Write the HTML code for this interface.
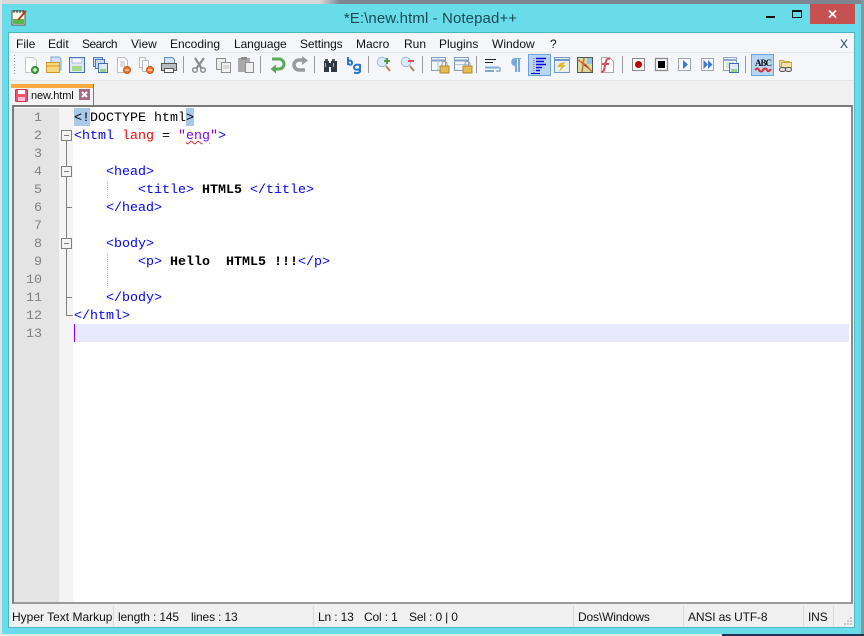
<!DOCTYPE html>
<html>
<head>
<meta charset="utf-8">
<style>
html,body{margin:0;padding:0}
body{width:864px;height:636px;overflow:hidden;position:relative;background:#68dce9;font-family:"Liberation Sans",sans-serif}
.a{position:absolute}
.m{position:absolute;top:36px;font-size:12px;line-height:16px;color:#111;white-space:nowrap}
.l{position:absolute;left:74px;height:18px;font:13.33px/18px "Liberation Mono",monospace;white-space:pre;color:#000;padding-top:2px}
.n{position:absolute;left:13px;width:29px;height:18px;text-align:right;font:13.33px/18px "Liberation Mono",monospace;color:#808080;padding-top:2px}
.t{color:#0000ff}.b{font-weight:bold;color:#000}
.s{position:absolute;top:610px;font-size:12px;line-height:14px;color:#111;white-space:nowrap;letter-spacing:-.15px}
.d{position:absolute;top:606px;width:1px;height:20px;background:#d8d8d8}
</style>
</head>
<body>
<div class="a" style="left:0;top:0;width:864px;height:4px;background:linear-gradient(90deg,#d8d8d8 0,#d8d8d8 320px,#7d8794 340px,#7d8794 100%)"></div>
<div class="a" style="left:0;top:0;width:2px;height:636px;background:#dfe3e6"></div>
<div class="a" style="left:861px;top:0;width:3px;height:636px;background:#8b95a0"></div>
<div class="a" style="left:0;top:634px;width:864px;height:2px;background:linear-gradient(90deg,#e4e4e4 0,#e4e4e4 722px,#1d3550 722px,#1d3550 100%)"></div>
<div class="a" style="left:2px;top:4px;width:859px;height:630px;background:#68dce9"></div>

<svg class="a" style="left:11px;top:9px" width="17" height="17" viewBox="0 0 17 17">
<rect x="1" y="2" width="13" height="14" fill="#fbfbe8" stroke="#555"/>
<rect x="2" y="10" width="11" height="5" fill="#57b94a"/>
<path d="M3 1v3M6 1v3M9 1v3M12 1v3" stroke="#333"/>
<path d="M7 11 15 2" stroke="#b9421e" stroke-width="2"/>
</svg>
<div class="a" style="left:0;width:861px;top:9px;text-align:center;font-size:15px;line-height:20px;color:#1d4a55;letter-spacing:.1px">*E:\new.html - Notepad++</div>
<div class="a" style="left:766px;top:16px;width:9px;height:2px;background:#111"></div>
<div class="a" style="left:792px;top:10px;width:8px;height:5px;border:1px solid #111;border-top-width:2px"></div>
<div class="a" style="left:810px;top:4px;width:45px;height:20px;background:#c75050"></div>
<svg class="a" style="left:828px;top:10px" width="9" height="8"><path d="M1 .5 8 7.500M8 .5 1 7.500" stroke="#fff" stroke-width="1.800"/></svg>

<div class="a" style="left:9px;top:33px;width:845px;height:594px;background:#f0f0f0;box-shadow:0 0 0 1px #4fb6c4"></div>
<div class="a" style="left:9px;top:33px;width:845px;height:19px;background:#f5f6fa"></div>
<div class="a" style="left:9px;top:52px;width:845px;height:29px;background:#f5f6f9;border-top:1px solid #e6e8ec;border-bottom:1px solid #e4e4e4;box-sizing:border-box"></div>

<div class="m" style="left:16px">File</div>
<div class="m" style="left:48px">Edit</div>
<div class="m" style="left:82px;letter-spacing:-.5px">Search</div>
<div class="m" style="left:131px">View</div>
<div class="m" style="left:170px">Encoding</div>
<div class="m" style="left:234px;letter-spacing:-.1px">Language</div>
<div class="m" style="left:300px;letter-spacing:-.1px">Settings</div>
<div class="m" style="left:356px">Macro</div>
<div class="m" style="left:404px">Run</div>
<div class="m" style="left:439px">Plugins</div>
<div class="m" style="left:492px">Window</div>
<div class="m" style="left:550px">?</div>
<div class="m" style="left:840px;color:#1d3f70">X</div>

<svg class="a" style="left:0;top:50px" width="864" height="32" viewBox="0 50 864 32">
<path d="M14 55.500h1M14 58.500h1M14 61.500h1M14 64.500h1M14 67.500h1M14 70.500h1M14 73.500h1" stroke="#9a9a9a" stroke-dasharray="1 1"/>
<path d="M183.500 56v17M260.500 56v17M314.500 56v17M368.500 56v17M422.500 56v17M476.500 56v17M622.500 56v17M745.500 56v17" stroke="#9b9b9b"/>
<rect x="528.500" y="54.500" width="22" height="21" fill="#b6d6f6" stroke="#6aa3e0"/>
<rect x="751.500" y="54.500" width="22" height="21" fill="#b6d6f6" stroke="#6aa3e0"/>
<path d="M25.500 57.500h8l3 3v12h-11z" fill="#fff" stroke="#c8c8c8"/>
<circle cx="35" cy="70" r="3.500" fill="#4fa84a" stroke="#2f7c31"/><path d="M33 70h4M35 68v4" stroke="#fff"/>
<path d="M51 57h8l2 2v11H51z" fill="#cfe0f8" stroke="#7ba4d8"/>
<rect x="46.500" y="62.500" width="13" height="10" fill="#f7d77c" stroke="#cf9a2a"/><path d="M47 66h12" stroke="#cf9a2a"/>
<rect x="69.500" y="57.500" width="15" height="15" fill="#dfe9f8" stroke="#3f6fb5"/>
<rect x="72" y="58" width="10" height="5" fill="#f3f6fb" stroke="#6b90c6" stroke-width=".5"/>
<rect x="72" y="66" width="10" height="5" fill="#a8d88a"/>
<rect x="93.500" y="57.500" width="9" height="9" fill="#c9daf3" stroke="#4c78b8"/>
<rect x="95.500" y="59.500" width="9" height="9" fill="#c9daf3" stroke="#4c78b8"/>
<rect x="98.500" y="63.500" width="9" height="9" fill="#dfe9f8" stroke="#3f6fb5"/>
<rect x="100" y="69" width="6" height="3" fill="#9bd080"/>
<path d="M117.500 57.500h7l3 3v12h-10z" fill="#fff" stroke="#bdbdbd"/><path d="M120 62h5M120 64h5M120 66h5" stroke="#bbb"/>
<circle cx="127" cy="70" r="3.500" fill="#f0752a" stroke="#c9561a"/><path d="M125 70h4" stroke="#fff"/>
<path d="M139.500 57.500h6v10h-6z" fill="#fff" stroke="#bbb"/><path d="M142.500 60.500h6v11h-6z" fill="#fff" stroke="#bbb"/>
<circle cx="150" cy="70" r="3.500" fill="#f0752a" stroke="#c9561a"/><path d="M148 70h4" stroke="#fff"/>
<path d="M164.500 57.500h8l2 2v5h-10z" fill="#d3e4f8" stroke="#5f8ec6"/>
<rect x="161.500" y="63.500" width="15" height="7" fill="#b9bcc0" stroke="#555"/>
<rect x="164.500" y="68.500" width="9" height="4" fill="#fff" stroke="#555"/>
<path d="M204 58 196 69M195 58l7 11" stroke="#8c8c8c" stroke-width="2.200" fill="none"/>
<circle cx="195" cy="70" r="2.300" fill="none" stroke="#8c8c8c" stroke-width="1.500"/><circle cx="203" cy="70" r="2.300" fill="none" stroke="#8c8c8c" stroke-width="1.500"/>
<rect x="216.500" y="58.500" width="9" height="11" fill="#ececec" stroke="#8d8d8d"/>
<rect x="221.500" y="62.500" width="9" height="10" fill="#f4f4f4" stroke="#8d8d8d"/><path d="M223 66h6M223 68h6" stroke="#bbb"/>
<rect x="238" y="58" width="12" height="14" fill="#a9a9a9"/><rect x="241" y="57" width="6" height="3" fill="#8d8d8d"/>
<rect x="245.500" y="62.500" width="8" height="10" fill="#f0f0f0" stroke="#8d8d8d"/>
<path d="M272 59h7a4.500 4.500 0 0 1 0 10h-5" fill="none" stroke="#5aa85a" stroke-width="3"/><path d="M276 64.500v9l-5.500-4.500z" fill="#5aa85a"/>
<path d="M305 60h-6a4.500 4.500 0 0 0 0 10h6" fill="none" stroke="#9a9a9a" stroke-width="3.500"/><path d="M302 56v9l6-4.500z" fill="#9a9a9a"/>
<path d="M324 61h5v11h-5zM331 61h6v11h-6z" fill="#2f3742"/><rect x="328" y="63" width="4" height="4" fill="#2f3742"/><path d="M325 59h3v2h-3zM332 59h3v2h-3z" fill="#555"/><path d="M325.500 63v4M333.500 63v4" stroke="#9fb0c2"/>
<path d="M348 57v8M348 61c3-1 4 0 4 2s-2 2-4 1" fill="none" stroke="#2c78c8" stroke-width="2"/>
<path d="M360 65c-3-1-6 0-6 2.500s4 3 6 1M360 64v7c0 2-3 2.500-6 1.500" fill="none" stroke="#2c78c8" stroke-width="2"/>
<circle cx="382" cy="62" r="4.700" fill="#dbe9f8" stroke="#9bb8d8"/><path d="M386 66l4 5" stroke="#b58b5a" stroke-width="2"/><path d="M384 61h6M387 58v6" stroke="#4f9a4f" stroke-width="2"/>
<circle cx="406" cy="62" r="4.700" fill="#dbe9f8" stroke="#9bb8d8"/><path d="M410 66l4 5" stroke="#b58b5a" stroke-width="2"/><path d="M408 61h6" stroke="#e04f4f" stroke-width="2"/>
<rect x="431.500" y="57.500" width="14" height="13" fill="#f4f8fc" stroke="#7f9fc6"/><path d="M432 60.500h13" stroke="#7f9fc6" stroke-width="2"/><path d="M438 58v12" stroke="#b4c6dc"/>
<rect x="440" y="66" width="9" height="7" fill="#e6bb52" stroke="#b48a2a"/><path d="M442 66v-2a2.500 2.500 0 0 1 5 0v2" fill="none" stroke="#999"/>
<rect x="454.500" y="57.500" width="14" height="13" fill="#f4f8fc" stroke="#7f9fc6"/><path d="M455 60.500h13" stroke="#7f9fc6" stroke-width="2"/><path d="M455 64.500h13" stroke="#b4c6dc"/>
<rect x="463" y="66" width="9" height="7" fill="#e6bb52" stroke="#b48a2a"/><path d="M465 66v-2a2.500 2.500 0 0 1 5 0v2" fill="none" stroke="#999"/>
<path d="M485 59.500h11M485 62.500h8" stroke="#222"/><path d="M485 67.500h14" stroke="#7fa8d8" stroke-width="2"/><path d="M485 71h9" stroke="#7fa8d8" stroke-width="2"/><path d="M500 67v4h-4" fill="none" stroke="#5a88c0"/>
<path d="M515 58h6v1h-1v13h-2V59h-1v13h-2v-6c-5 0-5-8 0-8z" fill="#79a9dc"/>
<path d="M534 58v16" stroke="#e04040" stroke-dasharray="1 1"/>
<path d="M536 58.500h10M536 61.500h8M536 64.500h10M536 67.500h6M536 70.500h4" stroke="#0000e0" stroke-width="1.500"/><path d="M531 73.500h9" stroke="#0000e0"/>
<rect x="554.500" y="57.500" width="15" height="15" fill="#e8f1fb" stroke="#6f97c8"/><path d="M555 60h14" stroke="#6f97c8" stroke-width="2"/><path d="M566 62l-6 1-3 4h4l-2 5 7-7h-3z" fill="#e8b73a"/>
<rect x="577.500" y="57.500" width="15" height="15" fill="#cfe0a0" stroke="#555"/><path d="M578 60l8 5 6 7M584 58l-2 14" stroke="#e0653a" stroke-width="1.500"/><path d="M587 58h5v6h-5z" fill="#8fc4e8"/>
<path d="M601.500 57.500h8l4 4v11h-12z" fill="#fff" stroke="#aaa"/><path d="M610 59c-3-1-4 1-4.500 4l-1.500 7c-.5 2-2 2-3 1.500M602 64h7" fill="none" stroke="#e04a55" stroke-width="2"/>
<g fill="#f8f8f8" stroke="#8a8a8a"><rect x="632.500" y="58.500" width="12" height="12"/><rect x="655.500" y="58.500" width="12" height="12" stroke-width="1.300"/><rect x="678.500" y="58.500" width="12" height="12" stroke="#9aa8bc"/><rect x="701.500" y="58.500" width="12" height="12" stroke="#9aa8bc"/></g>
<circle cx="638.500" cy="64.500" r="3.500" fill="#c00000"/>
<rect x="658" y="61" width="7" height="7" fill="#000"/>
<path d="M683 60v9l5-4.500z" fill="#3d78d0"/>
<path d="M703.500 60v9l4.500-4.500zM708 60v9l4.500-4.500z" fill="#3d78d0"/>
<rect x="723.500" y="57.500" width="13" height="13" fill="#f4f8fc" stroke="#8fa8c8"/><path d="M724 60h12" stroke="#8fa8c8" stroke-width="2"/><path d="M726 63h8M726 65h8M726 67h8" stroke="#b8d0b0"/>
<rect x="729.500" y="63.500" width="9" height="9" fill="#dfe9f8" stroke="#3f6fb5"/><rect x="731" y="69" width="6" height="3" fill="#9bd080"/>
<text x="755" y="66" font-family="Liberation Serif, serif" font-size="9" font-weight="bold" fill="#111" textLength="17">ABC</text>
<path d="M755 70c2-2 3-2 4 0s3 2 4 0 3-2 4 0 3 1 4-1" fill="none" stroke="#d83030" stroke-width="2"/>
<path d="M779.500 60.500h4l1 1h5v5h-10z" fill="#f0dc9a" stroke="#c8a848"/><path d="M781.500 62.500h10v5h-10z" fill="#f7e4a4" stroke="#c8a848"/>
<rect x="779.500" y="67.500" width="6" height="4" rx="2" fill="#ddd" stroke="#555"/><rect x="785.500" y="67.500" width="6" height="4" rx="2" fill="#ddd" stroke="#555"/>
</svg>

<div class="a" style="left:11px;top:84px;width:83px;height:22px;background:#f4f4f4;border-right:1px solid #777;box-sizing:border-box"></div>
<div class="a" style="left:11px;top:84px;width:82px;height:4px;background:#faaa3c"></div>
<svg class="a" style="left:15px;top:89px" width="13" height="13"><rect x=".5" y=".5" width="12" height="12" rx="1" fill="#ee5566" stroke="#c03a4a"/><rect x="3" y="1" width="7" height="4" fill="#fff"/><rect x="3" y="8" width="7" height="4" fill="#fbd"/></svg>
<div class="a" style="left:31px;top:89px;font-size:11px;line-height:15px;color:#111;letter-spacing:-.1px">new.html</div>
<svg class="a" style="left:79px;top:89px" width="11" height="11"><rect width="11" height="11" fill="#a56a82"/><path d="M3 3l5 5M8 3l-5 5" stroke="#fff" stroke-width="2"/></svg>

<div class="a" style="left:12px;top:105px;width:841px;height:499px;background:#fff;border:2px solid #7a7a7a;border-right-color:#8a8a8a;border-bottom-color:#9a9a9a;box-sizing:border-box;box-shadow:inset 0 0 0 1px #fff"></div>
<div class="a" style="left:14px;top:108px;width:45px;height:494px;background:#e4e4e4"></div>
<div class="a" style="left:59px;top:108px;width:14px;height:494px;background-color:#f1f1f1;background-image:radial-gradient(#fff 35%,transparent 40%);background-size:2px 2px"></div>
<div class="a" style="left:73px;top:324px;width:776px;height:18px;background:#e8e8ff"></div>
<div class="a" style="left:74px;top:324px;width:1px;height:18px;background:#8000ff"></div>
<div class="a" style="left:74px;top:108px;width:16px;height:18px;background:#a8c8ec"></div>
<div class="a" style="left:186px;top:108px;width:8px;height:18px;background:#a8c8ec"></div>

<div class="n" style="top:108px">1</div>
<div class="n" style="top:126px">2</div>
<div class="n" style="top:144px">3</div>
<div class="n" style="top:162px">4</div>
<div class="n" style="top:180px">5</div>
<div class="n" style="top:198px">6</div>
<div class="n" style="top:216px">7</div>
<div class="n" style="top:234px">8</div>
<div class="n" style="top:252px">9</div>
<div class="n" style="top:270px">10</div>
<div class="n" style="top:288px">11</div>
<div class="n" style="top:306px">12</div>
<div class="n" style="top:324px">13</div>

<svg class="a" style="left:59px;top:108px" width="60" height="216" viewBox="59 108 60 216">
<path d="M66.500 141V315.500H73M66.500 207.500H72M66.500 297.500H72" fill="none" stroke="#808080"/>
<g fill="#f4f4f4" stroke="#808080"><rect x="61.500" y="130.500" width="10" height="10"/><rect x="61.500" y="166.500" width="10" height="10"/><rect x="61.500" y="238.500" width="10" height="10"/></g>
<path d="M64 135.500h5M64 171.500h5M64 243.500h5" stroke="#808080"/>
<path d="M107.500 181v18M107.500 253v36" stroke="#c0c0c0" stroke-dasharray="1 1"/>
</svg>

<div class="l" style="top:108px">&lt;!DOCTYPE html&gt;</div>
<div class="l" style="top:126px"><span class="t">&lt;html</span> <span style="color:#f00">lang</span> = <span style="color:#8000ff">"<span style="text-decoration:underline wavy #d03030;text-decoration-thickness:1px">eng</span>"</span><span class="t">&gt;</span></div>
<div class="l t" style="top:162px">    &lt;head&gt;</div>
<div class="l" style="top:180px"><span class="t">        &lt;title&gt;</span> <span class="b">HTML5</span> <span class="t">&lt;/title&gt;</span></div>
<div class="l t" style="top:198px">    &lt;/head&gt;</div>
<div class="l t" style="top:234px">    &lt;body&gt;</div>
<div class="l" style="top:252px"><span class="t">        &lt;p&gt;</span> <span class="b">Hello  HTML5 !!!</span><span class="t">&lt;/p&gt;</span></div>
<div class="l t" style="top:288px">    &lt;/body&gt;</div>
<div class="l t" style="top:306px">&lt;/html&gt;</div>

<div class="a" style="left:9px;top:604px;width:845px;height:23px;background:#f0f0f0"></div>
<div class="d" style="left:113px"></div>
<div class="d" style="left:313px"></div>
<div class="d" style="left:573px"></div>
<div class="d" style="left:683px"></div>
<div class="d" style="left:803px"></div>
<div class="d" style="left:833px"></div>
<div class="s" style="left:12px;letter-spacing:0">Hyper Text Markup</div>
<div class="s" style="left:118px">length : 145</div>
<div class="s" style="left:191px">lines : 13</div>
<div class="s" style="left:318px">Ln : 13</div>
<div class="s" style="left:364px">Col : 1</div>
<div class="s" style="left:409px">Sel : 0 | 0</div>
<div class="s" style="left:578px">Dos\Windows</div>
<div class="s" style="left:688px">ANSI as UTF-8</div>
<div class="s" style="left:808px">INS</div>
<svg class="a" style="left:843px;top:616px" width="10" height="10"><path d="M7 1h2v2H7zM4 4h2v2H4zM7 4h2v2H7zM1 7h2v2H1zM4 7h2v2H4zM7 7h2v2H7z" fill="#c8c8c8"/></svg>
</body>
</html>
